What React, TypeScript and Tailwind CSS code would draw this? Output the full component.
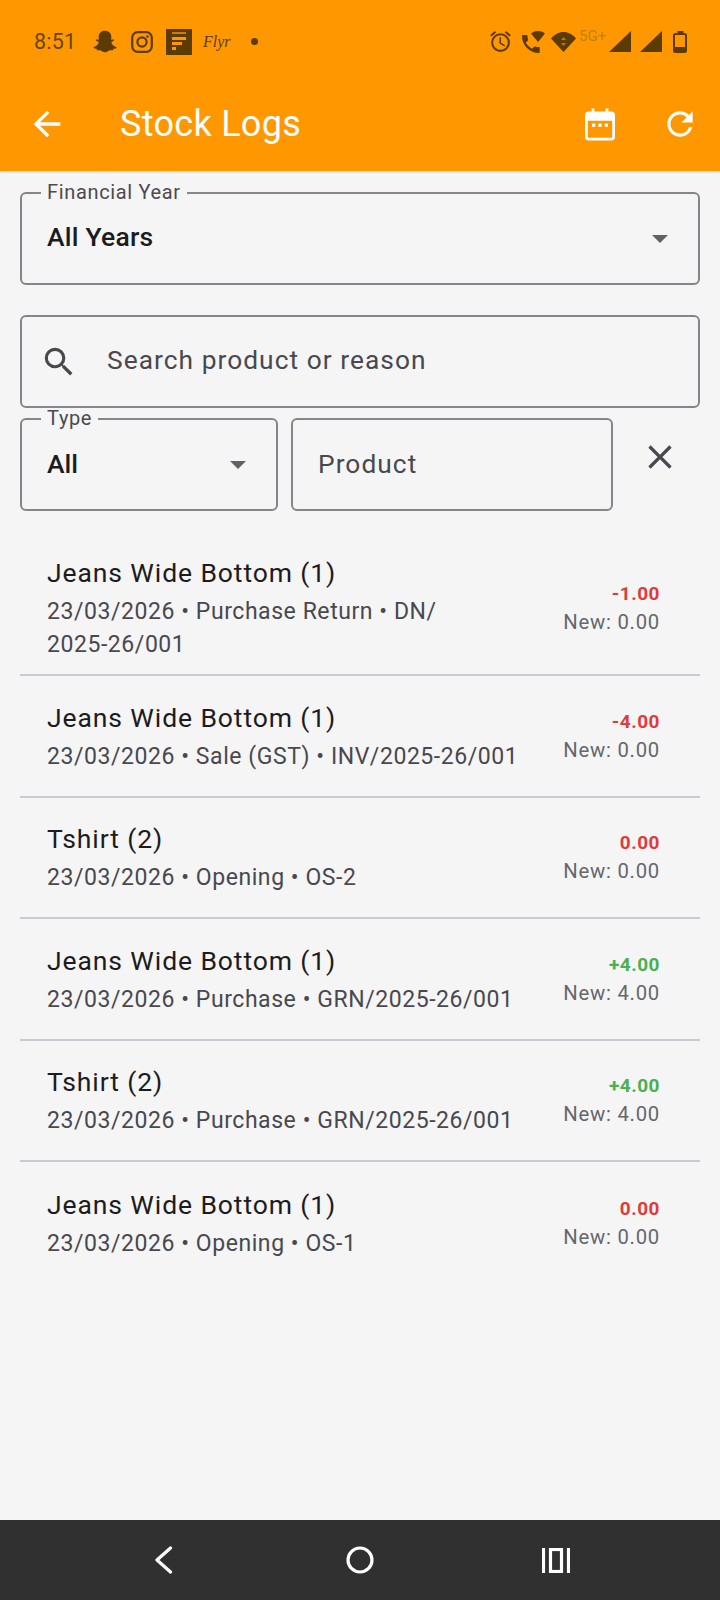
import React from "react";
import { FaSnapchatGhost } from "react-icons/fa";
import { MdArrowBack, MdRefresh, MdSearch, MdClose, MdOutlineAlarm } from "react-icons/md";

const rows = [
  { t: "Jeans Wide Bottom (1)", s: "23/03/2026 • Purchase Return • DN/ 2025-26/001", q: "-1.00", n: "New: 0.00", c: "text-[#e03b3b]", first: true },
  { t: "Jeans Wide Bottom (1)", s: "23/03/2026 • Sale (GST) • INV/2025-26/001", q: "-4.00", n: "New: 0.00", c: "text-[#e03b3b]" },
  { t: "Tshirt (2)", s: "23/03/2026 • Opening • OS-2", q: "0.00", n: "New: 0.00", c: "text-[#e03b3b]" },
  { t: "Jeans Wide Bottom (1)", s: "23/03/2026 • Purchase • GRN/2025-26/001", q: "+4.00", n: "New: 4.00", c: "text-[#4caf50]" },
  { t: "Tshirt (2)", s: "23/03/2026 • Purchase • GRN/2025-26/001", q: "+4.00", n: "New: 4.00", c: "text-[#4caf50]" },
  { t: "Jeans Wide Bottom (1)", s: "23/03/2026 • Opening • OS-1", q: "0.00", n: "New: 0.00", c: "text-[#e03b3b]", last: true },
];

function Caret() {
  return (
    <svg width="16" height="8" viewBox="0 0 16 8" className="shrink-0">
      <path d="M0 0h16l-8 8z" fill="#606066" />
    </svg>
  );
}

function Legend({ children }: { children: React.ReactNode }) {
  return (
    <span className="absolute left-[19px] top-[-11px] bg-[#f5f5f6] px-[6px] text-[20px] leading-[18px] tracking-[0.65px] text-[#4a4a50]">
      {children}
    </span>
  );
}

function Row({ r }: { r: (typeof rows)[number] }) {
  return (
    <div className={`flex items-center justify-between pl-[27px] pr-[40px] ${r.last ? "" : "border-b-[2px] border-[#c9cad2]"} ${r.first ? "h-[135px]" : "h-[121.5px]"}`}>
      <div className="w-[480px]">
        <div className="text-[26.5px] leading-[38px] tracking-[0.9px] text-[#1c1c20]">{r.t}</div>
        <div className="mt-[3px] w-[420px] text-[23px] leading-[33px] tracking-[0.56px] text-[#48484e]">
          {r.first ? r.s : <span className="whitespace-nowrap">{r.s}</span>}
        </div>
      </div>
      <div className="flex flex-col items-end">
        <div className={`text-[19px] font-bold leading-[26px] tracking-[0.5px] ${r.c}`}>{r.q}</div>
        <div className="mt-[2px] text-[20.3px] leading-[26px] tracking-[0.75px] text-[#66666c]">{r.n}</div>
      </div>
    </div>
  );
}

export default function App() {
  return (
    <div className="flex h-[1600px] w-[720px] flex-col overflow-hidden bg-[#f5f5f6] font-['Roboto',sans-serif]">
      <header className="h-[171px] shrink-0 bg-[#ff9800] shadow-[0_1px_2px_rgba(0,0,0,0.15)]">
        <div className="flex h-[82px] items-center pl-[34px] pt-[1px] text-[#5c3b00]">
          <span className="w-[40px] text-[21.5px] leading-none tracking-[0.2px] text-[#6b4400]">8:51</span>
          <FaSnapchatGhost className="ml-[19px] h-[23px] w-[24px]" />
          <svg width="22" height="22" viewBox="0 0 22 22" fill="none" stroke="currentColor" className="ml-[14px]">
            <rect x="1.2" y="1.2" width="19.6" height="19.6" rx="5.5" strokeWidth="2.2" />
            <circle cx="11" cy="11" r="4.6" strokeWidth="2.2" />
            <circle cx="16.5" cy="5.5" r="1.3" fill="currentColor" stroke="none" />
          </svg>
          <svg width="26" height="26" viewBox="0 0 26 26" className="ml-[13px]">
            <rect width="26" height="26" fill="#5c3b00" />
            <rect x="6" y="3" width="14" height="2" fill="#ff9800" opacity="0.7" />
            <rect x="6" y="8" width="14" height="3" fill="#ff9800" />
            <rect x="6" y="13" width="10" height="3" fill="#ff9800" />
            <rect x="6" y="18" width="4" height="3" fill="#ff9800" />
          </svg>
          <span className="ml-[11px] w-[26px] font-['Liberation_Serif',serif] text-[16px] italic leading-none">Flyr</span>
          <span className="ml-[22px] h-[7px] w-[7px] rounded-full bg-[#5c3b00]" />
          <div className="ml-[230px] flex items-center">
            <MdOutlineAlarm className="h-[25px] w-[25px]" />
            <svg width="24" height="24" viewBox="0 0 24 24" className="ml-[8px]" fill="currentColor">
              <path d="M1 6c0-.6.4-1 1-1h3.5c.6 0 1 .4 1 1 0 1.200.2 2.400.6 3.500.1.300 0 .700-.2 1l-2 2.100c1.300 2.700 3.500 4.800 6.200 6.200l2.100-2.100c.3-.3.700-.3 1-.2 1.100.4 2.300.6 3.500.6.600 0 1 .4 1 1V22c0 .6-.4 1-1 1C8.700 23 1 15.300 1 6z" />
              <path d="M10 3.500C12 1.800 14.400 1 17 1s5 .8 7 2.500L17 12z" />
            </svg>
            <svg width="25" height="20" viewBox="0 0 25 20" className="ml-[6px]">
              <path d="M0 6.500C3.300 2.500 7.700 0 12.500 0S21.700 2.500 25 6.500L12.500 20z" fill="#5c3b00" />
              <path d="M12.500 5l2.500 3h-5zM12.500 14l2.500-3h-5z" fill="#b87a10" />
            </svg>
            <span className="ml-[3px] mt-[-10px] w-[28px] text-[15px] leading-none text-[#c47f0a]">5G+</span>
            <svg width="22" height="21" viewBox="0 0 22 21" className="ml-[2px]"><path d="M0 21L22 0v21z" fill="#5c3b00" /></svg>
            <svg width="22" height="21" viewBox="0 0 22 21" className="ml-[9px]"><path d="M0 21L22 0v21z" fill="#5c3b00" /></svg>
            <svg width="14" height="22" viewBox="0 0 14 22" className="ml-[11px]" fill="none">
              <path d="M4.500 1h5v2" stroke="#5c3b00" strokeWidth="2" />
              <rect x="1" y="3" width="12" height="18" rx="1.500" stroke="#5c3b00" strokeWidth="2" />
              <rect x="1" y="16" width="12" height="5" fill="#5c3b00" />
            </svg>
          </div>
        </div>
        <div className="flex h-[80px] items-center pt-[4px] text-white">
          <MdArrowBack className="ml-[27px] h-[40px] w-[40px]" />
          <span className="ml-[53px] w-[300px] text-[36px] leading-none tracking-[0.3px]">Stock Logs</span>
          <svg width="30" height="33" viewBox="0 0 32 34" className="ml-[165px]">
            <path fillRule="evenodd" fill="#fff" d="M7 0h3v3h12V0h3v3h3a4 4 0 0 1 4 4v23a4 4 0 0 1-4 4H4a4 4 0 0 1-4-4V7a4 4 0 0 1 4-4h3zM3 13v17a1 1 0 0 0 1 1h24a1 1 0 0 0 1-1V13z" />
            <rect x="7.500" y="16" width="3.500" height="3.500" fill="#fff" />
            <rect x="14.250" y="16" width="3.500" height="3.500" fill="#fff" />
            <rect x="21" y="16" width="3.500" height="3.500" fill="#fff" />
          </svg>
          <MdRefresh className="ml-[46px] h-[38px] w-[38px]" />
        </div>
      </header>

      <main className="flex-1 px-[20px]">
        <div className="relative mt-[21px] flex h-[93px] items-center justify-between rounded-[6px] border-[2px] border-[#85858b] pl-[25px] pr-[30px]">
          <Legend>Financial Year</Legend>
          <span className="mt-[-3px] text-[26.5px] font-medium leading-[38px] tracking-[0.2px] text-[#1c1c20]">All Years</span>
          <Caret />
        </div>

        <div className="mt-[30px] flex h-[93px] items-center rounded-[6px] border-[2px] border-[#85858b] pl-[18px]">
          <MdSearch className="h-[38px] w-[38px] text-[#48484e]" />
          <span className="ml-[29px] mt-[-3px] text-[26.3px] leading-[38px] tracking-[1.05px] text-[#48484e]">Search product or reason</span>
        </div>

        <div className="mt-[10px] flex items-start">
          <div className="relative flex h-[93px] w-[258px] items-center justify-between rounded-[6px] border-[2px] border-[#85858b] pl-[25px] pr-[30px]">
            <Legend>Type</Legend>
            <span className="mt-[-2px] text-[26.5px] font-medium leading-[38px] text-[#1c1c20]">All</span>
            <Caret />
          </div>
          <div className="ml-[13px] flex h-[93px] w-[322px] items-center rounded-[6px] border-[2px] border-[#85858b] pl-[25px]">
            <span className="mt-[-2px] text-[26.3px] leading-[38px] tracking-[1.05px] text-[#48484e]">Product</span>
          </div>
          <MdClose className="ml-[27px] mt-[19px] h-[40px] w-[40px] text-[#48484e]" />
        </div>

        <div className="mt-[30px]">
          {rows.map((r, i) => (
            <Row key={i} r={r} />
          ))}
        </div>
      </main>

      <nav className="flex h-[80px] shrink-0 items-center bg-[#303030]">
        <svg width="20" height="28" viewBox="0 0 20 28" fill="none" stroke="#fff" strokeWidth="3.200" strokeLinecap="round" strokeLinejoin="round" className="ml-[154px]">
          <path d="M16.500 2L3 14l13.500 12" />
        </svg>
        <svg width="28" height="28" viewBox="0 0 28 28" fill="none" stroke="#fff" strokeWidth="3.200" className="ml-[172px]">
          <circle cx="14" cy="14" r="12" />
        </svg>
        <svg width="28" height="25" viewBox="0 0 28 25" fill="none" stroke="#fff" strokeWidth="3.200" className="ml-[168px]">
          <path d="M1.500 0v25M26.500 0v25" />
          <rect x="8.500" y="1.500" width="11" height="22" />
        </svg>
      </nav>
    </div>
  );
}
